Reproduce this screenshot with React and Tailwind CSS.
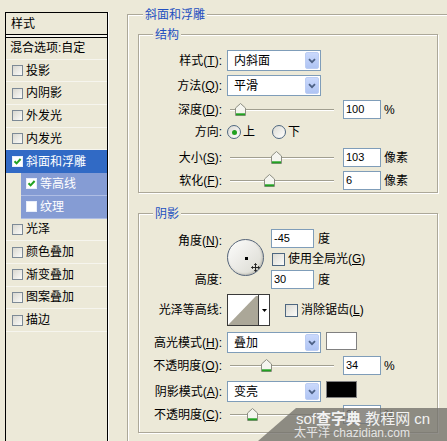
import React from "react";

const FONT = "font-['Liberation_Sans','Noto_Sans_CJK_SC',sans-serif]";

function Check({ checked, onBlue }) {
  return (
    <span
      className={`flex items-center justify-center w-[11px] h-[11px] shrink-0 border ${
        onBlue ? "border-[#e8eefb] bg-white" : "border-[#7d8a96] bg-gradient-to-br from-[#d9d8d0] to-[#fbfbf9]"
      }`}
    >
      {checked && (
        <svg width="9" height="9" viewBox="0 0 9 9">
          <path d="M1.5 4.2 L3.6 6.4 L7.6 2" stroke="#21a121" strokeWidth="2" fill="none" />
        </svg>
      )}
    </span>
  );
}

function BigCheck() {
  return (
    <span className="block w-[13px] h-[13px] shrink-0 border border-[#4e6780] bg-gradient-to-br from-[#dcdbd3] to-[#fbfbf9]" />
  );
}

function Radio({ on }) {
  return (
    <span className="flex items-center justify-center w-[14px] h-[14px] shrink-0 rounded-full border border-[#4e6780] bg-gradient-to-br from-[#dcdbd3] to-[#ffffff]">
      {on && <span className="block w-[5px] h-[5px] rounded-full bg-[#21a121]" />}
    </span>
  );
}

function Select({ value }) {
  return (
    <div className="flex items-center w-[94px] h-[21px] shrink-0 border border-[#7f9db9] bg-white">
      <span className="flex-1 pl-[6px] text-[12px] leading-none">{value}</span>
      <span className="flex items-center justify-center w-[14px] h-[17px] mr-[1px] rounded-[2px] border border-[#bccdf3] bg-gradient-to-b from-[#cad9fc] to-[#afc4f3]">
        <svg width="8" height="6" viewBox="0 0 8 6">
          <path d="M1 1.2 L4 4.2 L7 1.2" stroke="#4d6185" strokeWidth="1.8" fill="none" />
        </svg>
      </span>
    </div>
  );
}

function Input({ value, wide }) {
  return (
    <div
      className={`flex items-center h-[19px] shrink-0 border border-[#7f9db9] bg-white pl-[2px] text-[11px] leading-none ${
        wide ? "w-[43px]" : "w-[38px]"
      }`}
    >
      {value}
    </div>
  );
}

function Thumb({ cls }) {
  return (
    <svg className={`absolute top-[3px] ${cls}`} width="11" height="13" viewBox="0 0 11 13">
      <path d="M0.5 5 L5.5 0.5 L10.5 5 L10.5 12.5 L0.5 12.5 Z" fill="#f5f5ef" stroke="#8d8e82" />
      <path d="M1 11.3 H10" stroke="#21a121" strokeWidth="2" />
    </svg>
  );
}

function Slider({ cls }) {
  return (
    <div className="relative w-[104px] h-[19px] shrink-0 ml-[8px]">
      <div className="absolute left-0 right-0 top-[9px] h-[2px] border-t border-[#a19f90] border-b border-b-white" />
      <Thumb cls={cls} />
    </div>
  );
}

function Label({ children }) {
  return <div className="w-[83px] shrink-0 text-right whitespace-nowrap">{children}</div>;
}

function SliderRow({ label, thumb, value, unit, mt }) {
  return (
    <div className={`flex items-center h-[19px] ${mt}`}>
      <Label>{label}</Label>
      <Slider cls={thumb} />
      <div className="ml-[9px]">
        <Input value={value} />
      </div>
      <span className="ml-[3px]">{unit}</span>
    </div>
  );
}

const items = [
  { t: "投影" },
  { t: "内阴影" },
  { t: "外发光" },
  { t: "内发光" },
  { t: "斜面和浮雕", sel: true, checked: true },
  { t: "等高线", sub: true, checked: true },
  { t: "纹理", sub: true },
  { t: "光泽" },
  { t: "颜色叠加" },
  { t: "渐变叠加" },
  { t: "图案叠加" },
  { t: "描边" },
];

function ListRow({ it }) {
  if (it.sub) {
    return (
      <div className="flex h-[22.7px] pl-[15px]">
        <div className="flex flex-1 items-center pl-[5px] gap-[3px] bg-[#859cd4] text-white border-b border-[#aebde4]">
          <Check checked={it.checked} onBlue />
          <span>{it.t}</span>
        </div>
      </div>
    );
  }
  if (it.sel) {
    return (
      <div className="flex items-center h-[22.7px] pl-[6px] gap-[3px] bg-[#316ac5] text-white">
        <Check checked onBlue />
        <span>{it.t}</span>
      </div>
    );
  }
  return (
    <div className="flex items-center h-[22.7px] pl-[6px] gap-[3px] border-b border-[#f6f5ee]">
      <Check />
      <span>{it.t}</span>
    </div>
  );
}

export default function App() {
  return (
    <div className={`relative flex w-[447px] h-[441px] overflow-hidden bg-[#ece9d8] text-black text-[12px] leading-none ${FONT}`}>
      {/* left list */}
      <div className="flex w-[115px] shrink-0 pl-[5px] pt-[12px]">
        <div className="flex flex-col w-[103px] h-[440px] shrink-0 border-x border-t border-black">
          <div className="flex items-center h-[22px] pl-[5px] border-b border-black">样式</div>
          <div className="h-[2px] bg-[#f6f5ee]" />
          <div className="flex items-center h-[22.7px] pl-[4px] border-t border-black border-b border-b-[#f6f5ee]">
            混合选项:自定
          </div>
          {items.map((it) => (
            <ListRow key={it.t} it={it} />
          ))}
        </div>
        <div className="w-px h-[440px] bg-white" />
      </div>

      {/* right */}
      <div className="pl-[12px] pt-[14px]">
        <div className="relative w-[330px] h-[440px] border border-[#aca899] shadow-[inset_1px_1px_0_#fff,1px_1px_0_#fff] pl-[10px] pt-[19px]">
          <span className="absolute left-[15px] top-[-7px] px-[2px] leading-[14px] bg-[#ece9d8] text-[#2350c0]">斜面和浮雕</span>

          {/* 结构 */}
          <div className="relative w-[300px] h-[159px] border border-[#aca899] shadow-[inset_1px_1px_0_#fff,1px_1px_0_#fff] pt-[15px]">
            <span className="absolute left-[14px] top-[-7px] px-[2px] leading-[14px] bg-[#ece9d8] text-[#2350c0]">结构</span>
            <div className="flex items-center h-[21px]">
              <Label>样式(<u>T</u>):</Label>
              <div className="ml-[5px]"><Select value="内斜面" /></div>
            </div>
            <div className="flex items-center h-[21px] mt-[4px]">
              <Label>方法(<u>Q</u>):</Label>
              <div className="ml-[5px]"><Select value="平滑" /></div>
            </div>
            <SliderRow label={<>深度(<u>D</u>):</>} thumb="left-[5px]" value="100" unit="%" mt="mt-[4px]" />
            <div className="flex items-center h-[26px]">
              <Label>方向:</Label>
              <div className="ml-[5px] flex items-center gap-[2px]">
                <Radio on />
                <span>上</span>
              </div>
              <div className="ml-[17px] flex items-center gap-[2px]">
                <Radio />
                <span>下</span>
              </div>
            </div>
            <SliderRow label={<>大小(<u>S</u>):</>} thumb="left-[41px]" value="103" unit="像素" mt="mt-[3px]" />
            <SliderRow label={<>软化(<u>F</u>):</>} thumb="left-[34px]" value="6" unit="像素" mt="mt-[4px]" />
          </div>

          {/* 阴影 */}
          <div className="relative mt-[20px] w-[300px] h-[220px] border border-[#aca899] shadow-[inset_1px_1px_0_#fff,1px_1px_0_#fff] pt-[15px]">
            <span className="absolute left-[14px] top-[-7px] px-[2px] leading-[14px] bg-[#ece9d8] text-[#2350c0]">阴影</span>

            <div className="flex h-[60px]">
              <div className="flex flex-col">
                <div className="flex items-center h-[19px] mt-[2px]"><Label>角度(<u>N</u>):</Label></div>
                <div className="h-[20px]" />
                <div className="flex items-center h-[19px]"><Label>高度:</Label></div>
              </div>
              <div className="relative ml-[5px] mt-[10px] w-[37px] h-[37px] shrink-0 rounded-full border border-[#56657a] bg-gradient-to-br from-[#fdfdfc] to-[#d9d8d0] shadow-[inset_-1px_-1px_2px_#bdbcb2]">
                <span className="absolute left-[17px] top-[17px] w-[3px] h-[3px] bg-black" />
                <svg className="absolute left-[23px] top-[23px]" width="9" height="9" viewBox="0 0 9 9">
                  <path d="M4.5 0.5 V8.5 M0.5 4.5 H8.5" stroke="#222" strokeWidth="1" />
                  <path d="M3 2 L4.5 0.5 L6 2 M3 7 L4.5 8.5 L6 7 M2 3 L0.5 4.5 L2 6 M7 3 L8.5 4.5 L7 6" stroke="#222" strokeWidth="0.8" fill="none" />
                </svg>
              </div>
              <div className="ml-[7px] flex flex-col">
                <div className="flex items-center h-[19px]">
                  <Input value="-45" wide />
                  <span className="ml-[4px]">度</span>
                </div>
                <div className="flex items-center h-[22px] pl-[1px]">
                  <BigCheck />
                  <span className="ml-[3px]">使用全局光(<u>G</u>)</span>
                </div>
                <div className="flex items-center h-[19px]">
                  <Input value="30" wide />
                  <span className="ml-[4px]">度</span>
                </div>
              </div>
            </div>

            <div className="flex items-center h-[32px] mt-[5px]">
              <Label>光泽等高线:</Label>
              <div className="ml-[5px] flex w-[43px] h-[32px] shrink-0 border border-[#3a3a3a] bg-white">
                <svg width="30" height="30" viewBox="0 0 30 30" className="shrink-0">
                  <polygon points="0,30 28,1 30,1 30,30" fill="#aba798" />
                </svg>
                <div className="w-px bg-[#3a3a3a]" />
                <div className="flex flex-1 items-center justify-center">
                  <svg width="5" height="3" viewBox="0 0 5 3">
                    <path d="M0 0 H5 L2.5 3 Z" fill="#000" />
                  </svg>
                </div>
              </div>
              <div className="ml-[15px] flex items-center">
                <BigCheck />
                <span className="ml-[3px]">消除锯齿(<u>L</u>)</span>
              </div>
            </div>

            <div className="flex items-start h-[21px] mt-[6px]">
              <div className="flex items-center h-[21px]"><Label>高光模式(<u>H</u>):</Label></div>
              <div className="ml-[5px]"><Select value="叠加" /></div>
              <div className="ml-[5px] w-[31px] h-[18px] border border-[#808080] bg-white" />
            </div>
            <SliderRow label={<>不透明度(<u>O</u>):</>} thumb="left-[31px]" value="34" unit="%" mt="mt-[3px]" />
            <div className="flex items-start h-[21px] mt-[6px]">
              <div className="flex items-center h-[21px]"><Label>阴影模式(<u>A</u>):</Label></div>
              <div className="ml-[5px]"><Select value="变亮" /></div>
              <div className="ml-[5px] w-[31px] h-[17px] border border-[#808080] bg-black" />
            </div>
            <SliderRow label={<>不透明度(<u>C</u>):</>} thumb="left-[17px]" value="21" unit="%" mt="mt-[3px]" />
          </div>
        </div>
      </div>

      {/* watermark */}
      <div className="absolute left-[258px] top-[408px] right-0 bottom-0 bg-[#75736d]/80 [clip-path:polygon(38px_0,100%_0,100%_100%,0_100%)]">
        <div className="pl-[38px] pt-[3px] text-[#f2f2f2] text-[15px] leading-[16px] whitespace-nowrap">
          sof<span className="font-bold">查字典</span> 教程网 cn
        </div>
        <div className="pl-[36px] text-[#e4e4e4] text-[12px] leading-[13px] whitespace-nowrap">
          太平洋 chazidian.com
        </div>
      </div>
    </div>
  );
}
